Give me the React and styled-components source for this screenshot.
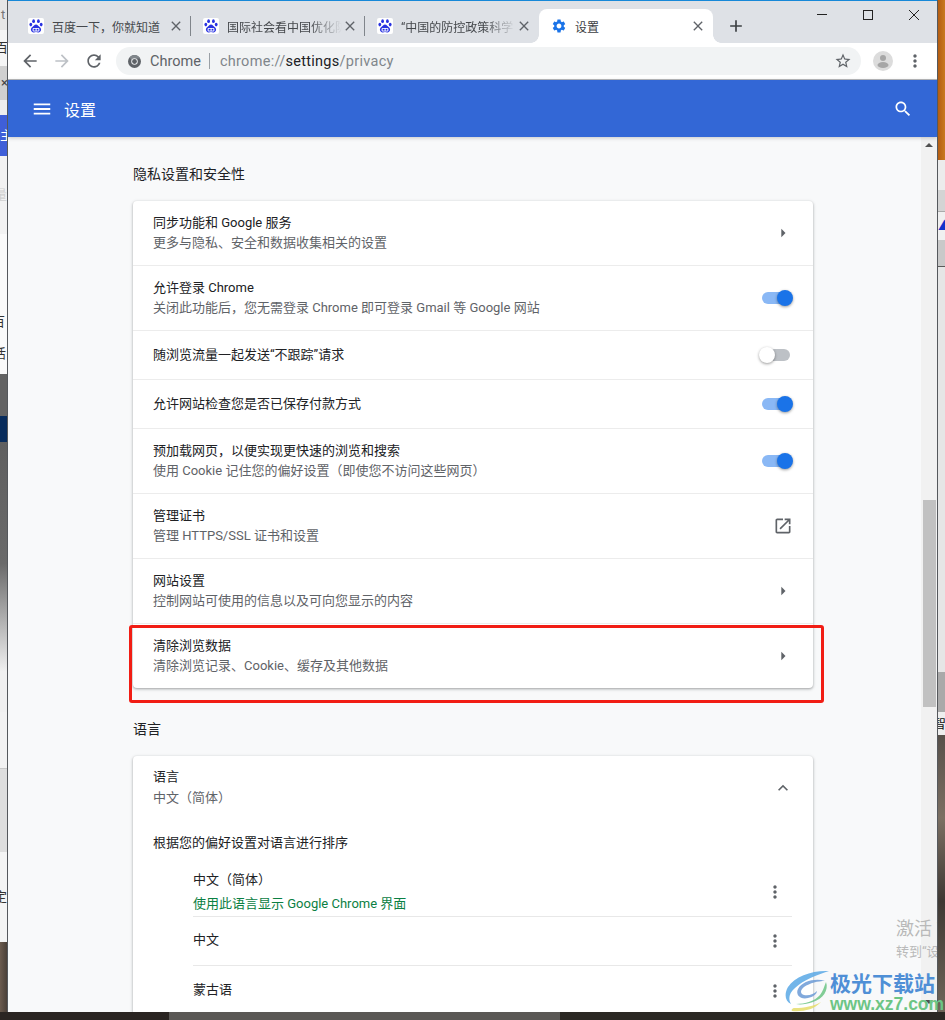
import React from 'react';
import styled, { createGlobalStyle } from 'styled-components';

const P = {
  back: 'M20 11H7.83l5.59-5.59L12 4l-8 8 8 8 1.41-1.41L7.83 13H20v-2z',
  forward: 'M12 4l-1.41 1.41L16.17 11H4v2h12.17l-5.58 5.59L12 20l8-8z',
  refresh: 'M17.65 6.35C16.2 4.9 14.21 4 12 4c-4.42 0-7.99 3.58-7.99 8s3.57 8 7.99 8c3.73 0 6.84-2.55 7.73-6h-2.08c-.82 2.33-3.04 4-5.65 4-3.31 0-6-2.69-6-6s2.69-6 6-6c1.66 0 3.14.69 4.22 1.78L13 11h7V4l-2.35 2.35z',
  star: 'M22 9.24l-7.19-.62L12 2 9.19 8.63 2 9.24l5.46 4.73L5.82 21 12 17.27 18.18 21l-1.63-7.03L22 9.24zM12 15.4l-3.76 2.27 1-4.28-3.32-2.88 4.38-.38L12 6.1l1.71 4.04 4.38.38-3.32 2.88 1 4.28L12 15.4z',
  more: 'M12 8c1.1 0 2-.9 2-2s-.9-2-2-2-2 .9-2 2 .9 2 2 2zm0 2c-1.1 0-2 .9-2 2s.9 2 2 2 2-.9 2-2-.9-2-2-2zm0 6c-1.1 0-2 .9-2 2s.9 2 2 2 2-.9 2-2-.9-2-2-2z',
  search: 'M15.5 14h-.79l-.28-.27C15.41 12.59 16 11.11 16 9.5 16 5.91 13.09 3 9.5 3S3 5.91 3 9.5 5.91 16 9.5 16c1.61 0 3.09-.59 4.23-1.57l.27.28v.79l5 4.99L20.49 19l-4.99-5zm-6 0C7.01 14 5 11.99 5 9.5S7.01 5 9.5 5 14 7.01 14 9.5 11.99 14 9.5 14z',
  menu: 'M3 18h18v-2H3v2zm0-5h18v-2H3v2zm0-7v2h18V6H3z',
  open: 'M19 19H5V5h7V3H5c-1.11 0-2 .9-2 2v14c0 1.1.89 2 2 2h14c1.1 0 2-.9 2-2v-7h-2v7zM14 3v2h3.59l-9.83 9.83 1.41 1.41L19 6.41V10h2V3h-7z',
  gear: 'M19.14 12.94c.04-.3.06-.61.06-.94 0-.32-.02-.64-.07-.94l2.03-1.58c.18-.14.23-.41.12-.61l-1.92-3.32c-.12-.22-.37-.29-.59-.22l-2.39.96c-.5-.38-1.03-.7-1.62-.94l-.36-2.54c-.04-.24-.24-.41-.48-.41h-3.84c-.24 0-.43.17-.47.41l-.36 2.54c-.59.24-1.13.57-1.62.94l-2.39-.96c-.22-.08-.47 0-.59.22L2.74 8.87c-.12.21-.08.47.12.61l2.03 1.58c-.05.3-.09.63-.09.94s.02.64.07.94l-2.03 1.58c-.18.14-.23.41-.12.61l1.92 3.32c.12.22.37.29.59.22l2.39-.96c.5.38 1.03.7 1.62.94l.36 2.54c.05.24.24.41.48.41h3.84c.24 0 .44-.17.47-.41l.36-2.54c.59-.24 1.13-.56 1.62-.94l2.39.96c.22.08.47 0 .59-.22l1.92-3.32c.12-.22.07-.47-.12-.61l-2.01-1.58zM12 15.6c-1.98 0-3.6-1.62-3.6-3.6s1.62-3.6 3.6-3.6 3.6 1.62 3.6 3.6-1.62 3.6-3.6 3.6z',
  less: 'M12 8l-6 6 1.41 1.41L12 10.83l4.59 4.58L18 14z',
  right: 'M10 17l5-5-5-5v10z',
  close: 'M19 6.41L17.59 5 12 10.59 6.41 5 5 6.41 10.59 12 5 17.59 6.41 19 12 13.41 17.59 19 19 17.59 13.41 12z',
  plus: 'M19 13h-6v6h-2v-6H5v-2h6V5h2v6h6v2z',
};

const Global = createGlobalStyle`
  html, body { margin: 0; padding: 0; height: 1020px; overflow: hidden; background: #2b2824; }
  * { box-sizing: border-box; }
  body { font-family: Roboto, "Noto Sans CJK SC", sans-serif; font-size: 13px; color: #202124; }
`;

const Svg = styled.svg`
  display: block;
  flex: none;
  width: ${p => p.$s}px;
  height: ${p => p.$s}px;
  fill: ${p => p.$c};
`;
const Icon = ({ d, s = 20, c = '#5f6368' }) => (
  <Svg $s={s} $c={c} viewBox="0 0 24 24"><path d={d} /></Svg>
);

const Page = styled.div`
  position: relative;
  width: 945px;
  height: 1020px;
  overflow: hidden;
  display: flex;
  flex-direction: column;
`;
const Desk = styled.div`
  display: flex;
  height: 1012px;
`;
const Strip = styled.div`
  flex: none;
  width: ${p => p.$w}px;
  display: flex;
  flex-direction: column;
  overflow: hidden;
`;
const Seg = styled.div`
  flex: none;
  height: ${p => p.$h}px;
  background: ${p => p.$bg};
  color: ${p => p.$fg || '#333'};
  font-size: 13px;
  line-height: ${p => p.$h}px;
  white-space: nowrap;
  overflow: hidden;
  border-bottom: ${p => p.$line ? `1px solid ${p.$line}` : 'none'};
`;
const Clip = styled.span`
  display: inline-block;
  margin-left: ${p => p.$x}px;
`;
const Window = styled.div`
  flex: none;
  width: 931px;
  display: flex;
  flex-direction: column;
  border-left: 1px solid #55585c;
  border-right: 1px solid #55585c;
  background: #f8f9fa;
  overflow: hidden;
`;
const TopLine = styled.div`
  height: 1px;
  flex: none;
  background: #1688d8;
`;
const TabStrip = styled.div`
  flex: none;
  height: 42px;
  background: #dee1e6;
  display: flex;
  align-items: flex-end;
  padding-left: 8px;
`;
const Tab = styled.div`
  position: relative;
  flex: none;
  width: ${p => p.$w}px;
  height: 34px;
  display: flex;
  align-items: center;
  padding: 0 7px 0 12px;
  background: ${p => p.$active ? '#fff' : 'transparent'};
  border-radius: 8px 8px 0 0;
  color: ${p => p.$active ? '#3c4043' : '#45484c'};
  font-size: 12px;
  &::after {
    content: '';
    display: ${p => p.$sep ? 'block' : 'none'};
    position: absolute;
    right: 0;
    top: 7px;
    height: 20px;
    width: 1px;
    background: #80858b;
  }
`;
const Flare = styled.i`
  position: absolute;
  bottom: 0;
  width: 8px;
  height: 8px;
  ${p => p.$side}: -8px;
  background: radial-gradient(circle at ${p => p.$side === 'left' ? '0 0' : '100% 0'}, transparent 7.5px, #fff 8px);
`;
const TabTitle = styled.span`
  flex: 1;
  min-width: 0;
  margin-left: ${p => p.$gap}px;
  white-space: nowrap;
  overflow: hidden;
  -webkit-mask-image: ${p => p.$fade ? 'linear-gradient(90deg, #000 72%, transparent)' : 'none'};
  mask-image: ${p => p.$fade ? 'linear-gradient(90deg, #000 72%, transparent)' : 'none'};
`;
const NewTab = styled.div`
  flex: none;
  width: 28px;
  height: 34px;
  margin-left: 9px;
  display: flex;
  align-items: center;
  justify-content: center;
`;
const Controls = styled.div`
  margin-left: auto;
  align-self: flex-start;
  display: flex;
`;
const Ctrl = styled.div`
  width: 46px;
  height: 28px;
  display: flex;
  align-items: center;
  justify-content: center;
`;
const Line = styled.svg`
  display: block;
  width: 12px;
  height: 12px;
  fill: none;
  stroke: #222;
  stroke-width: 1;
`;
const Toolbar = styled.div`
  flex: none;
  height: 37px;
  background: #fff;
  border-bottom: 1px solid #b9babc;
  display: flex;
  align-items: center;
  padding: 0 0 0 8px;
`;
const ToolBtn = styled.div`
  flex: none;
  width: 28px;
  height: 28px;
  margin-right: 4px;
  display: flex;
  align-items: center;
  justify-content: center;
`;
const Omni = styled.div`
  flex: none;
  width: 745px;
  height: 28px;
  margin: 0 8px 0 4px;
  border-radius: 14px;
  background: #f1f3f4;
  display: flex;
  align-items: center;
  padding: 0 9px 0 12px;
  font-size: 14.5px;
  color: #5f6368;
`;
const Divider = styled.span`
  width: 1px;
  height: 16px;
  background: #9aa0a6;
  margin: 0 10px 0 8px;
`;
const OmniUrl = styled.span`
  flex: 1;
  color: #80868b;
  letter-spacing: 0.02em;
  b { font-weight: 400; color: #202124; }
`;
const OmniLabel = styled.span`
  margin-left: 9px;
`;
const Avatar = styled.div`
  width: 20px;
  height: 20px;
  border-radius: 50%;
  background: #dcdcdc;
`;
const Header = styled.div`
  flex: none;
  height: 57px;
  background: #3367d6;
  display: flex;
  align-items: center;
  padding: 0 24px 0 23px;
  color: #fff;
  font-size: 16px;
  position: relative;
  z-index: 1;
  box-shadow: 0 1px 4px rgba(0,0,0,.2);
`;
const HeaderTitle = styled.span`
  flex: 1;
  margin-left: 11px;
`;
const Body = styled.div`
  flex: 1;
  min-height: 0;
  display: flex;
`;
const Content = styled.div`
  flex: 1;
  min-width: 0;
  overflow: hidden;
  padding: 27px 0 0 125px;
`;
const SectionTitle = styled.div`
  height: 20px;
  line-height: 20px;
  font-size: 14px;
  margin-bottom: 17px;
  color: #202124;
`;
const Card = styled.div`
  width: 680px;
  background: #fff;
  border-radius: 4px;
  box-shadow: 0 1px 2px rgba(60,64,67,.3), 0 1px 3px 1px rgba(60,64,67,.15);
  margin-bottom: 31px;
`;
const Row = styled.div`
  height: ${p => p.$h}px;
  display: flex;
  align-items: center;
  padding: 0 20px;
  border-top: ${p => p.$first ? 'none' : '1px solid #ececec'};
`;
const Texts = styled.div`
  flex: 1;
  min-width: 0;
`;
const Primary = styled.div`
  line-height: 20px;
  font-size: 13px;
  color: #202124;
`;
const Secondary = styled.div`
  line-height: 20px;
  font-size: 13px;
  margin-top: ${p => p.$gap || 0}px;
  color: ${p => p.$c || '#5f6368'};
`;
const EndSlot = styled.div`
  flex: none;
  width: 20px;
  display: flex;
  justify-content: center;
`;
const Track = styled.div`
  position: relative;
  flex: none;
  width: 28px;
  height: 12px;
  margin-right: 3px;
  border-radius: 6px;
  background: ${p => p.$on ? '#8ab8f5' : '#bdc1c6'};
`;
const Knob = styled.i`
  position: absolute;
  top: -2px;
  left: ${p => p.$on ? 15 : -3}px;
  width: 16px;
  height: 16px;
  border-radius: 50%;
  background: ${p => p.$on ? '#1a73e8' : '#fff'};
  box-shadow: 0 1px 3px rgba(0,0,0,.4);
`;
const LangHead = styled.div`
  display: flex;
  align-items: center;
  padding: 11px 20px 0;
`;
const SortHint = styled.div`
  line-height: 20px;
  margin: 25px 20px 0;
`;
const LangList = styled.div`
  margin: 0 21px 0 60px;
`;
const LangItem = styled.div`
  display: flex;
  align-items: center;
  height: ${p => p.$h}px;
  border-bottom: 1px solid #e8e8e8;
  padding-top: ${p => p.$pt || 0}px;
  &:last-child { border-bottom: none; }
`;
const LangText = styled.div`
  flex: 1;
  min-width: 0;
  margin-bottom: ${p => p.$lift || 0}px;
`;
const Dots = styled.div`
  flex: none;
  margin-right: 7px;
`;
const Scrollbar = styled.div`
  flex: none;
  width: 16px;
  background: #f1f1f1;
  display: flex;
  flex-direction: column;
  align-items: center;
  padding-top: 6px;
`;
const ArrowUp = styled.i`
  width: 0;
  height: 0;
  border-left: 4px solid transparent;
  border-right: 4px solid transparent;
  border-bottom: 4px solid #505050;
`;
const Thumb = styled.div`
  width: 13px;
  height: 207px;
  margin-top: 353px;
  background: #c1c1c1;
`;
const ArrowDown = styled.i`
  width: 0;
  height: 0;
  margin-top: 293px;
  border-left: 4px solid transparent;
  border-right: 4px solid transparent;
  border-top: 4px solid #505050;
`;
const Bottom = styled.div`
  flex: none;
  height: 8px;
  background: linear-gradient(90deg, #2a2522 0 169px, #5a5855 169px 560px, #2b2824 560px);
`;
const RedBox = styled.div`
  position: absolute;
  left: 129px;
  top: 625px;
  width: 695px;
  height: 78px;
  border: 3px solid #f11d14;
  border-radius: 3px;
  pointer-events: none;
`;
const Activate = styled.div`
  position: absolute;
  left: 896px;
  top: 916px;
  width: 41px;
  overflow: hidden;
  white-space: nowrap;
  color: #b9b9b9;
  pointer-events: none;
`;
const ActBig = styled.div`
  font-size: 18px;
  line-height: 25px;
`;
const ActSmall = styled.div`
  font-size: 13px;
  line-height: 18px;
  margin-top: 2px;
`;
const Mark = styled.div`
  position: absolute;
  left: 785px;
  top: 970px;
  display: flex;
  gap: 1px;
  pointer-events: none;
`;
const MarkLogo = styled.svg`
  display: block;
  width: 44px;
  height: 42px;
  opacity: .85;
`;
const MarkText = styled.div`
  display: flex;
  flex-direction: column;
`;
const MarkName = styled.div`
  font-family: "Noto Sans CJK SC", sans-serif;
  font-weight: 700;
  font-size: 21px;
  line-height: 24px;
  color: #4f8fd6;
  white-space: nowrap;
`;
const MarkUrl = styled.div`
  font-family: "Liberation Sans", sans-serif;
  font-weight: 700;
  font-size: 17.5px;
  line-height: 16px;
  margin-top: 2px;
  color: #6cc585;
  white-space: nowrap;
`;

const Baidu = () => (
  <svg width="16" height="16" viewBox="0 0 16 16" style={{ display: 'block', flex: 'none' }}>
    <rect width="16" height="16" rx="2" fill="#fff" />
    <g fill="#2932e1">
      <ellipse cx="5.6" cy="3.2" rx="1.4" ry="1.9" />
      <ellipse cx="10.4" cy="3.2" rx="1.4" ry="1.9" />
      <ellipse cx="2.8" cy="6.6" rx="1.4" ry="1.8" />
      <ellipse cx="13.2" cy="6.6" rx="1.4" ry="1.8" />
      <path d="M8 6.4c1.6 0 2.4 1.5 3.6 2.6 1.4 1.2 1.7 2.2 1.4 3.3-.3 1.3-1.5 2.2-2.8 2.1-.9 0-1.5-.4-2.2-.4s-1.3.4-2.2.4c-1.3.1-2.5-.8-2.8-2.1-.3-1.1 0-2.1 1.4-3.3C5.6 7.9 6.4 6.4 8 6.4z" />
    </g>
    <rect x="4.6" y="10" width="6.8" height="3.4" rx="1" fill="#fff" />
    <rect x="5.6" y="10.8" width="2" height="1.8" fill="#2932e1" />
    <rect x="8.6" y="10.8" width="1.8" height="1.8" fill="#2932e1" />
  </svg>
);

const ChromeLogo = () => (
  <svg width="13" height="13" viewBox="0 0 24 24" style={{ display: 'block', flex: 'none' }}>
    <circle cx="12" cy="12" r="12" fill="#5f6368" />
    <path d="M12 6.5h10.6A12 12 0 0 0 3 4l5 8a5.5 5.5 0 0 1 4-5.5z" fill="#80868b" />
    <circle cx="12" cy="12" r="6" fill="#f1f3f4" />
    <circle cx="12" cy="12" r="4.4" fill="#5f6368" />
  </svg>
);

const Toggle = ({ on }) => (
  <Track $on={on}><Knob $on={on} /></Track>
);
const Arrow = () => <EndSlot><Icon d={P.right} s={20} /></EndSlot>;
const MoreBtn = () => <Dots><Icon d={P.more} s={20} /></Dots>;

const tabs = [
  { title: '百度一下，你就知道', w: 175 },
  { title: '国际社会看中国优化防疫', w: 174, fade: true },
  { title: '“中国的防控政策科学', w: 174, fade: true },
];

const leftSegs = [
  { h: 30, bg: '#e6e6e6', fg: '#777', x: 1, t: 't' },
  { h: 36, bg: '#f5f5f5', x: -5, t: '百度' },
  { h: 34, bg: '#d0d0d0', fg: '#444', x: 1, t: '×' },
  { h: 15, bg: '#eeeeee' },
  { h: 41, bg: '#3f5fd8', fg: '#fff', x: 0, t: '主' },
  { h: 78, bg: '#f2f2f2', fg: '#d0d0d0', x: -6, t: '量' },
  { h: 75, bg: '#fafafa' },
  { h: 25, bg: '#fafafa', x: -8, t: '百' },
  { h: 40, bg: '#fafafa', x: -7, t: '活' },
  { h: 42, bg: '#636363' },
  { h: 26, bg: '#082c5c' },
  { h: 270, bg: 'linear-gradient(#5f5f5f 0%, #6a6a6a 45%, #f0f0f0 85%, #f0f0f0)' },
  { h: 57, bg: '#f2f2f2', line: '#c8c8c8' },
  { h: 83, bg: '#dedede' },
  { h: 90, bg: '#f4f4f4', x: -6, t: '定' },
  { h: 70, bg: 'linear-gradient(90deg, #6b5b4e, #4a4038)' },
];
const rightSegs = [
  { h: 160, bg: 'linear-gradient(90deg, #b45d12, #c9791f)' },
  { h: 30, bg: '#ececec' },
  { h: 22, bg: '#d4d4d4', line: '#aaa' },
  { h: 28, bg: '#f0f0f0', fg: '#1133cc', x: 0, t: '▲' },
  { h: 27, bg: '#c9c9c9', line: '#5a5a5a' },
  { h: 405, bg: '#e6e6e6' },
  { h: 40, bg: '#a9a9a9' },
  { h: 23, bg: '#eee', fg: '#111', x: -5, t: '智能' },
  { h: 277, bg: 'linear-gradient(#57504a, #7b6f62 30%, #3e3833 60%, #70665a)' },
];

const Segs = ({ list }) => list.map((s, i) => (
  <Seg key={i} $h={s.h} $bg={s.bg} $fg={s.fg} $line={s.line}>
    {s.t ? <Clip $x={s.x}>{s.t}</Clip> : null}
  </Seg>
));

export default function App() {
  return (
    <Page>
      <Global />
      <Desk>
        <Strip $w={7}><Segs list={leftSegs} /></Strip>
        <Window>
          <TopLine />
          <TabStrip>
            {tabs.map((t, i) => (
              <Tab key={i} $w={t.w} $sep={i < 2}>
                <Baidu />
                <TabTitle $gap={8} $fade={t.fade}>{t.title}</TabTitle>
                <Icon d={P.close} s={16} />
              </Tab>
            ))}
            <Tab $w={174} $active>
              <Flare $side="left" />
              <Flare $side="right" />
              <Icon d={P.gear} s={16} c="#1a73e8" />
              <TabTitle $gap={8}>设置</TabTitle>
              <Icon d={P.close} s={16} />
            </Tab>
            <NewTab><Icon d={P.plus} s={20} c="#3c4043" /></NewTab>
            <Controls>
              <Ctrl><Line viewBox="0 0 12 12"><path d="M1 5.5h10" /></Line></Ctrl>
              <Ctrl><Line viewBox="0 0 12 12"><rect x="1.5" y="1.5" width="9" height="9" /></Line></Ctrl>
              <Ctrl><Line viewBox="0 0 12 12"><path d="M1 1l10 10M11 1L1 11" /></Line></Ctrl>
            </Controls>
          </TabStrip>
          <Toolbar>
            <ToolBtn><Icon d={P.back} s={20} /></ToolBtn>
            <ToolBtn><Icon d={P.forward} s={20} c="#bdc1c6" /></ToolBtn>
            <ToolBtn><Icon d={P.refresh} s={20} /></ToolBtn>
            <Omni>
              <ChromeLogo />
              <OmniLabel>Chrome</OmniLabel>
              <Divider />
              <OmniUrl>chrome://<b>settings</b>/privacy</OmniUrl>
              <Icon d={P.star} s={18} />
            </Omni>
            <ToolBtn>
              <Avatar>
                <svg width="20" height="20" viewBox="0 0 20 20" style={{ display: 'block' }}>
                  <circle cx="10" cy="7" r="3" fill="#a6a6a6" />
                  <ellipse cx="10" cy="14" rx="5.5" ry="3" fill="#a6a6a6" />
                </svg>
              </Avatar>
            </ToolBtn>
            <ToolBtn><Icon d={P.more} s={20} /></ToolBtn>
          </Toolbar>
          <Header>
            <Icon d={P.menu} s={22} c="#fff" />
            <HeaderTitle>设置</HeaderTitle>
            <Icon d={P.search} s={20} c="#fff" />
          </Header>
          <Body>
            <Content>
              <SectionTitle>隐私设置和安全性</SectionTitle>
              <Card>
                <Row $h={64} $first>
                  <Texts><Primary>同步功能和 Google 服务</Primary><Secondary>更多与隐私、安全和数据收集相关的设置</Secondary></Texts>
                  <Arrow />
                </Row>
                <Row $h={65}>
                  <Texts><Primary>允许登录 Chrome</Primary><Secondary>关闭此功能后，您无需登录 Chrome 即可登录 Gmail 等 Google 网站</Secondary></Texts>
                  <Toggle on />
                </Row>
                <Row $h={49}>
                  <Texts><Primary>随浏览流量一起发送“不跟踪”请求</Primary></Texts>
                  <Toggle />
                </Row>
                <Row $h={49}>
                  <Texts><Primary>允许网站检查您是否已保存付款方式</Primary></Texts>
                  <Toggle on />
                </Row>
                <Row $h={65}>
                  <Texts><Primary>预加载网页，以便实现更快速的浏览和搜索</Primary><Secondary>使用 Cookie 记住您的偏好设置（即使您不访问这些网页）</Secondary></Texts>
                  <Toggle on />
                </Row>
                <Row $h={65}>
                  <Texts><Primary>管理证书</Primary><Secondary>管理 HTTPS/SSL 证书和设置</Secondary></Texts>
                  <EndSlot><Icon d={P.open} s={20} /></EndSlot>
                </Row>
                <Row $h={65}>
                  <Texts><Primary>网站设置</Primary><Secondary>控制网站可使用的信息以及可向您显示的内容</Secondary></Texts>
                  <Arrow />
                </Row>
                <Row $h={65}>
                  <Texts><Primary>清除浏览数据</Primary><Secondary>清除浏览记录、Cookie、缓存及其他数据</Secondary></Texts>
                  <Arrow />
                </Row>
              </Card>
              <SectionTitle>语言</SectionTitle>
              <Card>
                <LangHead>
                  <Texts><Primary>语言</Primary><Secondary $gap={1}>中文（简体）</Secondary></Texts>
                  <EndSlot><Icon d={P.less} s={20} /></EndSlot>
                </LangHead>
                <SortHint>根据您的偏好设置对语言进行排序</SortHint>
                <LangList>
                  <LangItem $h={64} $pt={15}>
                    <LangText><Primary>中文（简体）</Primary><Secondary $gap={4} $c="#0b8043">使用此语言显示 Google Chrome 界面</Secondary></LangText>
                    <MoreBtn />
                  </LangItem>
                  <LangItem $h={49}><LangText $lift={2}><Primary>中文</Primary></LangText><MoreBtn /></LangItem>
                  <LangItem $h={49}><LangText $lift={2}><Primary>蒙古语</Primary></LangText><MoreBtn /></LangItem>
                </LangList>
              </Card>
            </Content>
            <Scrollbar>
              <ArrowUp />
              <Thumb />
              <ArrowDown />
            </Scrollbar>
          </Body>
        </Window>
        <Strip $w={7}><Segs list={rightSegs} /></Strip>
      </Desk>
      <Bottom />
      <RedBox />
      <Activate>
        <ActBig>激活 Windows</ActBig>
        <ActSmall>转到“设置”以激活</ActSmall>
      </Activate>
      <Mark>
        <MarkLogo viewBox="0 0 44 42">
          <path d="M44 1C28 0 10 6 3 17c-4 7-3 14 3 17-3-5-2-11 4-16C18 10 32 5 44 1z" fill="#5aa9e6" />
          <path d="M40 11c-9-3-23 0-27 8-3 6 3 11 10 9 5-1 9-4 9-7-3 3-8 5-13 4-4-1-4-5 0-8 6-4 14-6 21-6z" fill="#6c9bd6" />
          <path d="M41 12c3 8-3 17-13 20-6 2-12 3-17 2 9 0 19-3 24-9 3-4 4-8 6-13z" fill="#6cc585" />
          <path d="M7 41c10 1 22-1 29-9-7 4-17 6-26 6-3 0-4 2-3 3z" fill="#e6dd6a" />
        </MarkLogo>
        <MarkText>
          <MarkName>极光下载站</MarkName>
          <MarkUrl>www.xz7.com</MarkUrl>
        </MarkText>
      </Mark>
    </Page>
  );
}
